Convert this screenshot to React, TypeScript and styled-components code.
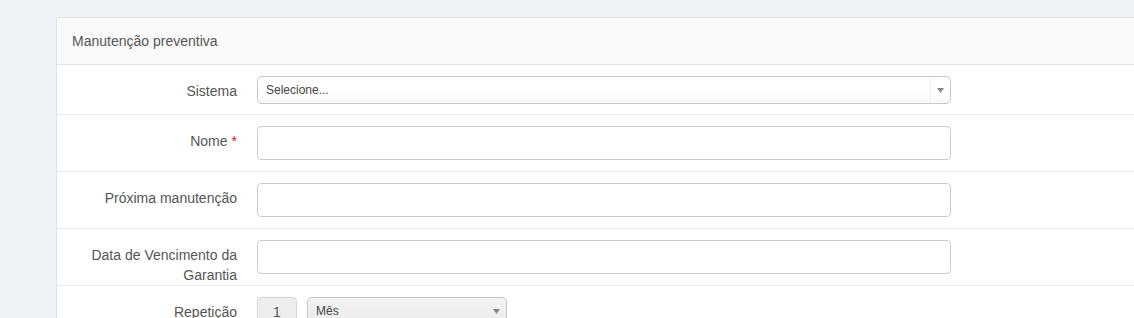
import React from "react";
import styled, { createGlobalStyle } from "styled-components";

const GlobalStyle = createGlobalStyle`
  html, body {
    margin: 0;
    padding: 0;
    background: #eff3f8;
    font-family: "Liberation Sans", Arial, sans-serif;
    overflow: hidden;
  }
`;

const Page = styled.div`
  padding: 17px 0 0 56px;
  width: 1134px;
  height: 318px;
  box-sizing: border-box;
  overflow: hidden;
`;

const Panel = styled.div`
  background: #fff;
  border: 1px solid #e2e2e2;
  border-right: none;
  width: 1200px;
`;

const PanelHeader = styled.div`
  height: 46px;
  padding-left: 15px;
  display: flex;
  align-items: center;
  background: #fafafa;
  border-bottom: 1px solid #e3e3e3;
  color: #555;
  font-size: 14px;
`;

const Row = styled.div<{ $pad?: number }>`
  display: flex;
  align-items: flex-start;
  padding: 11px 0 ${p => p.$pad ?? 11}px;
  border-bottom: 1px solid #ececec;
`;

const Label = styled.div`
  width: 180px;
  height: 23px;
  padding: 5px 20px 0 0;
  text-align: right;
  color: #555;
  font-size: 14px;
  line-height: 20px;
  overflow: visible;
`;

const Required = styled.span`
  color: #e21111;
  margin-left: 4px;
`;

const TextInput = styled.div`
  width: 694px;
  height: 34px;
  box-sizing: border-box;
  border: 1px solid #ccc;
  border-radius: 4px;
  background: #fff;
`;

const Chosen = styled.div<{ $width: number; $gray?: boolean }>`
  width: ${p => p.$width}px;
  height: 28px;
  box-sizing: border-box;
  border: 1px solid #c6c6c6;
  border-radius: 5px;
  background: ${p =>
    p.$gray
      ? "linear-gradient(#f2f2f2, #ececec)"
      : "linear-gradient(#fff 60%, #f8f8f8)"};
  display: flex;
  align-items: center;
  padding-left: 8px;
  font-size: 12px;
  color: #444;
`;

const ChosenText = styled.span`
  flex: 1;
`;

const ChosenArrow = styled.span`
  width: 18px;
  height: 100%;
  border-left: 1px solid #f0f0f0;
  display: flex;
  align-items: center;
  justify-content: center;
  margin-right: 1px;
  font-size: 8px;
  color: #888;
`;

const Inline = styled.div`
  display: flex;
  align-items: flex-start;
  gap: 10px;
`;

const NumberBox = styled.div`
  width: 40px;
  height: 34px;
  box-sizing: border-box;
  border: 1px solid #d6d6d6;
  border-radius: 4px;
  background: #eee;
  color: #555;
  font-size: 14px;
  display: flex;
  justify-content: center;
  padding-top: 6px;
`;

const Arrow = () => (
  <ChosenArrow>
    <svg width="7" height="5" viewBox="0 0 7 5">
      <path d="M0 0h7L3.5 5z" fill="#888" />
    </svg>
  </ChosenArrow>
);

export default function App() {
  return (
    <Page>
      <GlobalStyle />
      <Panel>
        <PanelHeader>Manutenção preventiva</PanelHeader>
        <Row $pad={10}>
          <Label>Sistema</Label>
          <Chosen $width={694}>
            <ChosenText>Selecione...</ChosenText>
            <Arrow />
          </Chosen>
        </Row>
        <Row>
          <Label>
            Nome<Required>*</Required>
          </Label>
          <TextInput />
        </Row>
        <Row>
          <Label>Próxima manutenção</Label>
          <TextInput />
        </Row>
        <Row>
          <Label>Data de Vencimento da Garantia</Label>
          <TextInput />
        </Row>
        <Row>
          <Label>Repetição</Label>
          <Inline>
            <NumberBox>1</NumberBox>
            <Chosen $width={200} $gray>
              <ChosenText>Mês</ChosenText>
              <Arrow />
            </Chosen>
          </Inline>
        </Row>
      </Panel>
    </Page>
  );
}
